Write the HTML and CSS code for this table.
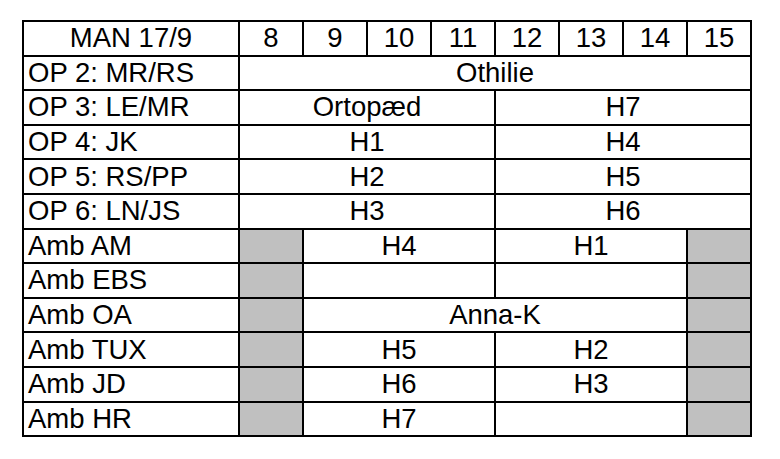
FILE: index.html
```html
<!DOCTYPE html>
<html>
<head>
<meta charset="utf-8">
<link rel="stylesheet" href="styles.css">
</head>
<body>
<table class="plan">
  <colgroup>
    <col class="c-label">
    <col class="c-hour"><col class="c-hour"><col class="c-hour"><col class="c-hour">
    <col class="c-hour"><col class="c-hour"><col class="c-hour"><col class="c-hour">
  </colgroup>
  <tr>
    <td class="center">MAN 17/9</td>
    <td class="center">8</td><td class="center">9</td><td class="center">10</td><td class="center">11</td>
    <td class="center">12</td><td class="center">13</td><td class="center">14</td><td class="center">15</td>
  </tr>
  <tr><td>OP 2: MR/RS</td><td colspan="8" class="center">Othilie</td></tr>
  <tr><td>OP 3: LE/MR</td><td colspan="4" class="center">Ortopæd</td><td colspan="4" class="center">H7</td></tr>
  <tr><td>OP 4: JK</td><td colspan="4" class="center">H1</td><td colspan="4" class="center">H4</td></tr>
  <tr><td>OP 5: RS/PP</td><td colspan="4" class="center">H2</td><td colspan="4" class="center">H5</td></tr>
  <tr><td>OP 6: LN/JS</td><td colspan="4" class="center">H3</td><td colspan="4" class="center">H6</td></tr>
  <tr><td>Amb AM</td><td class="off"></td><td colspan="3" class="center">H4</td><td colspan="3" class="center">H1</td><td class="off"></td></tr>
  <tr><td>Amb EBS</td><td class="off"></td><td colspan="3" class="center"></td><td colspan="3" class="center"></td><td class="off"></td></tr>
  <tr><td>Amb OA</td><td class="off"></td><td colspan="6" class="center">Anna-K</td><td class="off"></td></tr>
  <tr><td>Amb TUX</td><td class="off"></td><td colspan="3" class="center">H5</td><td colspan="3" class="center">H2</td><td class="off"></td></tr>
  <tr><td>Amb JD</td><td class="off"></td><td colspan="3" class="center">H6</td><td colspan="3" class="center">H3</td><td class="off"></td></tr>
  <tr><td>Amb HR</td><td class="off"></td><td colspan="3" class="center">H7</td><td colspan="3" class="center"></td><td class="off"></td></tr>
</table>
</body>
</html>
```
FILE: styles.css
```css
html, body {
  margin: 0;
  padding: 0;
  background: #ffffff;
}
body {
  padding: 20px 0 0 22px;
}
.plan {
  border-collapse: collapse;
  table-layout: fixed;
  width: 730px;
  font-family: "Liberation Sans", Arial, sans-serif;
  font-size: 27.5px;
  color: #000;
}
.c-label { width: 216px; }
.c-hour { width: 64px; }
.plan tr { height: 34.6px; }
.plan td {
  border: 2px solid #000;
  padding: 0 0 0 4px;
  line-height: 30px;
  white-space: nowrap;
  vertical-align: middle;
  overflow: hidden;
}
.plan td.center {
  text-align: center;
  padding: 0;
}
.plan td.off {
  background: #c0c0c0;
  padding: 0;
}
```
